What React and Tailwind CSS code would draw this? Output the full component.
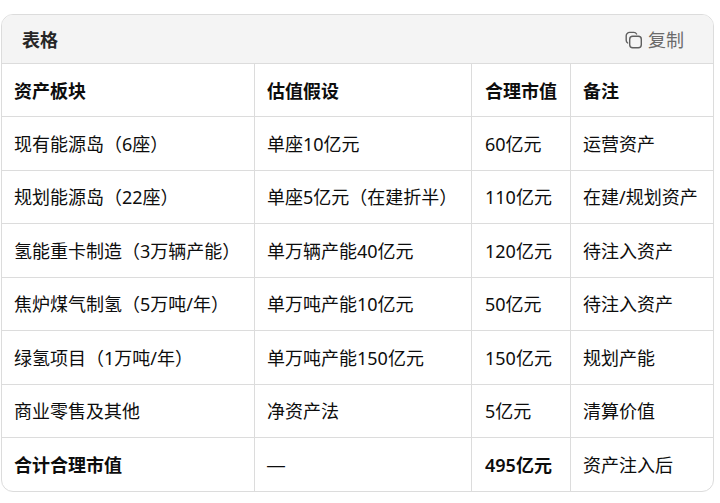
import React from "react";

const rows = [
  ["现有能源岛（6座）", "单座10亿元", "60亿元", "运营资产"],
  ["规划能源岛（22座）", "单座5亿元（在建折半）", "110亿元", "在建/规划资产"],
  ["氢能重卡制造（3万辆产能）", "单万辆产能40亿元", "120亿元", "待注入资产"],
  ["焦炉煤气制氢（5万吨/年）", "单万吨产能10亿元", "50亿元", "待注入资产"],
  ["绿氢项目（1万吨/年）", "单万吨产能150亿元", "150亿元", "规划产能"],
  ["商业零售及其他", "净资产法", "5亿元", "清算价值"],
];

function CopyIcon() {
  return (
    <svg width="18" height="18" viewBox="0 0 18 18" fill="none" stroke="#5f5f5f" strokeWidth="1.4" strokeLinecap="round">
      <rect x="4.7" y="5.2" width="11.6" height="11.6" rx="3" />
      <path d="M11.6 3C11 2 10 1.4 8.8 1.4H4.6C2.7 1.4 1.2 2.9 1.2 4.8v4.4c0 1.2.5 2.2 1.5 2.8" />
    </svg>
  );
}

const th = "h-[53px] pl-3 pr-3 pt-[2px] text-left font-bold border-b border-r border-[#dcdcdc] last:border-r-0 nth-[3]:pl-[13px]";
const td = "h-[53.5px] pl-3 pr-3 pt-[2px] font-normal border-b border-r border-[#dcdcdc] last:border-r-0 whitespace-nowrap nth-[3]:pl-[13px]";
const foot = "h-[53px] pl-3 pr-3 pt-[2px] border-r border-[#dcdcdc] last:border-r-0 nth-[3]:pl-[13px]";

export default function App() {
  return (
    <div className="w-[720px] h-[503px] bg-white pt-[14px] pl-px font-['Noto_Sans','Noto_Sans_CJK_SC',sans-serif] text-[#0d0d0d]">
      <div className="w-[713px] h-[478px] border border-[#dcdcdc] rounded-[12px] overflow-hidden">
        <div className="h-[49px] pt-[2px] bg-[#f4f4f4] border-b border-[#dcdcdc] flex items-center justify-between pl-[20px] pr-[29px]">
          <span className="text-[18px] font-bold text-[#262626]">表格</span>
          <span className="flex items-center gap-[5px] text-[18px] text-[#6b6b6b]">
            <CopyIcon />
            复制
          </span>
        </div>
        <table className="w-full border-separate border-spacing-0 table-fixed text-[18px]">
          <colgroup>
            <col className="w-[253px]" />
            <col className="w-[217px]" />
            <col className="w-[99px]" />
            <col />
          </colgroup>
          <thead>
            <tr>
              <th className={th}>资产板块</th>
              <th className={th}>估值假设</th>
              <th className={th}>合理市值</th>
              <th className={th}>备注</th>
            </tr>
          </thead>
          <tbody>
            {rows.map((r) => (
              <tr key={r[0]}>
                {r.map((c) => (
                  <td key={c} className={td}>{c}</td>
                ))}
              </tr>
            ))}
            <tr>
              <td className={foot + " font-bold"}>合计合理市值</td>
              <td className={foot + " font-['Liberation_Sans',sans-serif]"}>—</td>
              <td className={foot + " font-bold"}><span className="font-semibold">495</span>亿元</td>
              <td className={foot}>资产注入后</td>
            </tr>
          </tbody>
        </table>
      </div>
    </div>
  );
}
